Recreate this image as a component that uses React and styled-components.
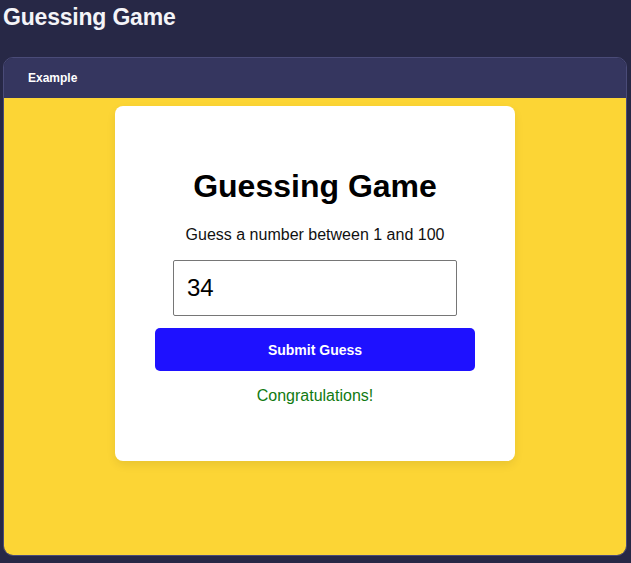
import React, { useState } from 'react'
import styled, { createGlobalStyle } from 'styled-components'

const GlobalStyle = createGlobalStyle`
	html, body {
		margin: 0;
		padding: 0;
		background: #272846;
		font-family: "Liberation Sans", Arial, sans-serif;
	}
`

const Page = styled.div`
	height: 100vh;
	box-sizing: border-box;
	display: flex;
	flex-direction: column;
	padding: 0 4px 7px 3px;
`

const PageTitle = styled.h1`
	margin: 0;
	padding-top: 3px;
	font-size: 23px;
	line-height: 28px;
	font-weight: 700;
	color: #f4f4f8;
	letter-spacing: -0.2px;
`

const Panel = styled.div`
	flex: 1;
	margin-top: 26px;
	display: flex;
	flex-direction: column;
	border: 1px solid #4a4b78;
	border-radius: 10px;
	overflow: hidden;
`

const PanelHead = styled.div`
	height: 40px;
	display: flex;
	align-items: center;
	padding-left: 24px;
	background: #35365f;
	color: #ffffff;
	font-size: 12px;
	font-weight: 700;
`

const Stage = styled.div`
	flex: 1;
	background: #fcd535;
	display: flex;
	justify-content: center;
	align-items: flex-start;
	padding-top: 8px;
`

const Card = styled.div`
	width: 400px;
	box-sizing: border-box;
	padding: 40px;
	background: #ffffff;
	border-radius: 8px;
	box-shadow: 0 4px 10px rgba(0, 0, 0, 0.08);
	text-align: center;
`

const Heading = styled.h2`
	margin: 21px 0;
	font-size: 32px;
	line-height: 38px;
	font-weight: 700;
	color: #000;
`

const Hint = styled.p`
	margin: 16px 0;
	font-size: 16px;
	line-height: 18px;
	color: #111;
`

const GuessInput = styled.input`
	display: block;
	width: 284px;
	height: 56px;
	box-sizing: border-box;
	margin: 0 auto 12px;
	padding: 0 13px;
	font-family: "Liberation Sans", Arial, sans-serif;
	font-size: 24px;
	color: #000;
	border: 1px solid #767676;
	border-radius: 2px;
	outline: none;
`

const SubmitButton = styled.button`
	display: block;
	width: 100%;
	height: 43px;
	border: none;
	border-radius: 5px;
	background: #1e11ff;
	color: #ffffff;
	font-family: "Liberation Sans", Arial, sans-serif;
	font-size: 14px;
	font-weight: 700;
	cursor: pointer;
`

const Message = styled.p`
	margin: 16px 0;
	font-size: 16px;
	line-height: 18px;
	color: ${props => (props.ok ? '#117a11' : '#c0392b')};
`

const App = () => {
	const [guess, setGuess] = useState('34')
	const [message] = useState('Congratulations!')

	return (
		<Page>
			<GlobalStyle />
			<PageTitle>Guessing Game</PageTitle>
			<Panel>
				<PanelHead>Example</PanelHead>
				<Stage>
					<Card>
						<Heading>Guessing Game</Heading>
						<Hint>Guess a number between 1 and 100</Hint>
						<GuessInput value={guess} onChange={e => setGuess(e.target.value)} />
						<SubmitButton>Submit Guess</SubmitButton>
						<Message ok>{message}</Message>
					</Card>
				</Stage>
			</Panel>
		</Page>
	)
}

export default App
